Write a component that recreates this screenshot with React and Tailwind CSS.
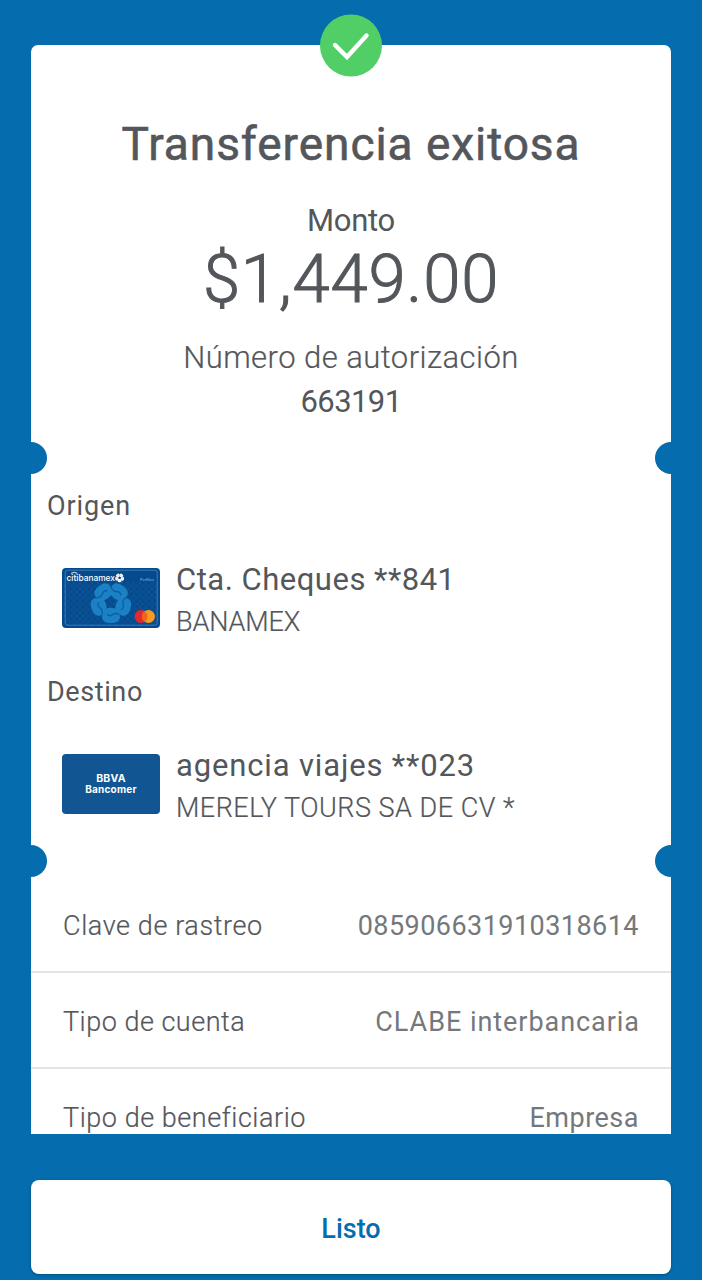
const petals = [0, 72, 144, 216, 288];

function Emblem({ cx, cy, scale, color, gap }) {
  return (
    <g transform={`translate(${cx} ${cy}) scale(${scale})`}>
      {petals.map((angle) => (
        <g key={angle} transform={`rotate(${angle + 180})`}>
          <path d="M-9 -15 Q-8 -20.5 0 -20.5 Q8.5 -20.5 9 -15 Q9 -9 4.5 -6 Q1 -4.5 -4.5 -6 Q-9 -9 -9 -15Z" fill={color} />
          <path d="M-8.5 -12 Q-4 -10 -2 -12 Q1 -14.5 3.5 -12" stroke={gap} strokeWidth="1.3" fill="none" strokeLinecap="round" />
        </g>
      ))}
    </g>
  );
}

function BanamexCard() {
  return (
    <svg className="h-[60px] w-[98px]" viewBox="0 0 98 60">
      <defs>
        <pattern id="mesh" width="6" height="6" patternUnits="userSpaceOnUse">
          <circle cx="3" cy="3" r="2.6" fill="none" stroke="#1c69ab" strokeWidth="0.6" />
        </pattern>
      </defs>
      <rect width="98" height="60" rx="4" fill="#044a8c" />
      <rect x="2" y="14" width="94" height="44" fill="url(#mesh)" opacity="0.5" />
      <rect x="3.2" y="2.2" width="92" height="55" rx="2.5" fill="none" stroke="#4f8fc4" strokeWidth="0.7" />
      <Emblem cx={49} cy={34.5} scale={1} color="#1b80c4" gap="#0c5ea4" />
      <text x="4.5" y="13" textLength="48.5" lengthAdjust="spacingAndGlyphs" fontFamily="Inter, sans-serif" fontWeight="500" fontSize="9" fill="#fff">citibanamex</text>
      <path d="M9 5.4 Q12.2 3.2 15.4 5.4" fill="none" stroke="#fff" strokeWidth="0.9" />
      <Emblem cx={57.6} cy={9.8} scale={0.22} color="#fff" gap="#5d8fbd" />
      <text x="78" y="13" textLength="14" lengthAdjust="spacingAndGlyphs" fontFamily="Open Sans, sans-serif" fontSize="4" fill="#a9cbe6">Perfiles</text>
      <circle cx="79" cy="48.5" r="6.5" fill="#e3282f" />
      <circle cx="86.5" cy="48.5" r="6.5" fill="#f59a22" />
      <path d="M82.75 43.2 a6.5 6.5 0 0 1 0 10.6 a6.5 6.5 0 0 1 0 -10.6Z" fill="#f26322" />
    </svg>
  );
}

function Notches() {
  return (
    <div className="flex h-8 justify-between">
      <div className="h-8 w-4 rounded-r-full bg-[#056dae]" />
      <div className="h-8 w-4 rounded-l-full bg-[#056dae]" />
    </div>
  );
}

function Row({ label, value, labelClass, valueClass }) {
  return (
    <div className="flex h-24 shrink-0 items-center justify-between border-b-2 border-[#e4e4e4] px-8 pt-1 text-[27px] whitespace-nowrap">
      <span className={labelClass}>{label}</span>
      <span className={valueClass}>{value}</span>
    </div>
  );
}

export default function App() {
  return (
    <div className="flex h-[1280px] w-[702px] flex-col overflow-hidden bg-[#056dae] px-[31px] pt-[45px] font-['Roboto',sans-serif] text-[#53565a]">
      <main className="relative h-[1089px] shrink-0">
        <svg className="absolute -top-[31px] left-1/2 h-[63px] w-[63px] -translate-x-1/2" viewBox="0 0 63 63">
          <circle cx="31.5" cy="31.5" r="31" fill="#51cf66" />
          <path d="M15.5 31 L27.5 43 L47 21.5" fill="none" stroke="#fff" strokeWidth="4.4" strokeLinecap="round" strokeLinejoin="miter" />
        </svg>
        <div className="flex h-full flex-col overflow-hidden rounded-t-[7px] bg-white whitespace-nowrap">
          <section className="flex flex-col items-center pt-[69px]">
            <h1 className="h-[60px] text-[46px] leading-[60px] tracking-[0.95px] [-webkit-text-stroke:0.6px]">Transferencia exitosa</h1>
            <p className="mt-[27px] text-[31px] leading-10 tracking-[-0.3px]">Monto</p>
            <p className="text-[67px] leading-[76px] font-light tracking-[0.8px] [-webkit-text-stroke:1px]">$1,449.00</p>
            <p className="mt-[21px] text-[31px] leading-10 font-light tracking-[0.45px] [-webkit-text-stroke:0.2px]">Número de autorización</p>
            <p className="mt-1 text-[31px] leading-10 tracking-[-0.6px]">663191</p>
          </section>
          <div className="mt-5"><Notches /></div>
          <section className="px-4">
            <h2 className="mt-3 text-[27px] leading-10 tracking-[0.9px]">Origen</h2>
            <div className="mt-[34px] flex items-start gap-4 pl-[15px]">
              <div className="mt-2"><BanamexCard /></div>
              <div>
                <p className="text-[31px] leading-10 tracking-[0.5px]">Cta. Cheques **841</p>
                <p className="mt-0.5 text-[27px] leading-10 font-light tracking-[-0.1px] [-webkit-text-stroke:0.2px]">BANAMEX</p>
              </div>
            </div>
            <h2 className="mt-[30px] text-[27px] leading-10 tracking-[0.6px]">Destino</h2>
            <div className="mt-[34px] flex items-start gap-4 pl-[15px]">
              <div className="mt-2 flex h-[60px] w-[98px] flex-col items-center justify-center rounded-[4px] bg-[#115692] font-['Inter',sans-serif] text-[10px] leading-[11.5px] font-bold tracking-[0.2px] text-white">
                <span className="text-[10.5px]">BBVA</span>
                <span>Bancomer</span>
              </div>
              <div>
                <p className="text-[31px] leading-10 tracking-[0.85px]">agencia viajes **023</p>
                <p className="mt-0.5 text-[27px] leading-10 font-light tracking-[0.5px] [-webkit-text-stroke:0.2px]">MERELY TOURS SA DE CV *</p>
              </div>
            </div>
          </section>
          <div className="mt-[17px]"><Notches /></div>
          <section className="flex flex-col">
            <Row label="Clave de rastreo" value="085906631910318614" labelClass="font-light tracking-[0.6px] [-webkit-text-stroke:0.2px]" valueClass="text-[#75787b] tracking-[0.45px]" />
            <Row label="Tipo de cuenta" value="CLABE interbancaria" labelClass="font-light tracking-[0.5px] [-webkit-text-stroke:0.2px]" valueClass="-mr-px text-[#75787b] tracking-[0.95px]" />
            <Row label="Tipo de beneficiario" value="Empresa" labelClass="font-light tracking-[0.55px] [-webkit-text-stroke:0.2px]" valueClass="text-[#75787b] tracking-[0.5px]" />
          </section>
        </div>
      </main>
      <button className="mt-[46px] flex h-[94px] w-full shrink-0 items-center justify-center rounded-[8px] bg-white pt-1 text-[27px] font-medium text-[#056dae] shadow-[0_1px_3px_rgba(0,0,0,0.3)]">Listo</button>
    </div>
  );
}
